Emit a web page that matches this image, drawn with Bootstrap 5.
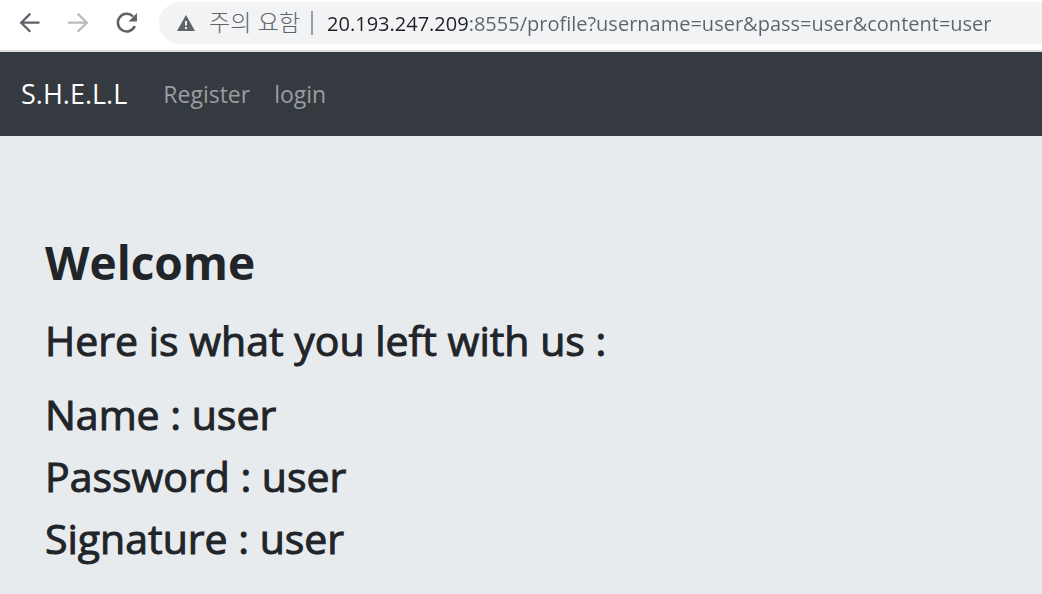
<!DOCTYPE html>
<html lang="en">
<head>
<meta charset="utf-8">
<meta name="viewport" content="width=device-width, initial-scale=1">
<title>S.H.E.L.L</title>
<link href="https://cdn.jsdelivr.net/npm/bootstrap@5.3.0/dist/css/bootstrap.min.css" rel="stylesheet">
<style>
body { font-family: "Open Sans", "Noto Sans", sans-serif; background: #e8ebee; color: #212529; }
.toolbar { height: 52px; padding: 2px 0 6px 16px; background: #fff; border-bottom: 2px solid #dadce0; }
.tool-btn { width: 28px; height: 28px; margin-right: 20px; color: #5f6368; background: none; border: 0; padding: 0; }
.tool-btn:last-of-type { margin-right: 19px; }
.tool-btn:disabled { color: #babcbe; }
.tool-btn svg { display: block; width: 28px; height: 28px; }
.omnibox { height: 42px; background: #f1f3f4; border-radius: 21px 0 0 21px; padding-left: 17px; font-size: 20px; color: #5f6368; }
.site-warning { font-family: "Noto Sans CJK KR", sans-serif; font-weight: 300; font-size: 23px; line-height: 38px; padding-bottom: 4px; margin-left: 13px; }
.divider { width: 2px; height: 24px; background: #9a9da1; margin: 0 14px 0 11px; }
/* the host is drawn darker than the rest of the address */
.address { min-width: 0; border: 0; padding: 2px 0 0; outline: 0; color: #5f6368; -webkit-text-fill-color: transparent;
  background: linear-gradient(90deg, #202124 142px, #5f6368 142px); -webkit-background-clip: text; background-clip: text; }
.site-nav { --bs-navbar-nav-link-padding-x: 12px; min-height: 84px; padding: 0 21px; background: #343a40; }
.site-nav .navbar-brand { font-size: 27px; line-height: 42px; margin-right: 24px; padding: 0; }
.site-nav .nav-link { font-size: 23px; line-height: 36px; color: #9a9da0; }
.profile { padding: 95px 45px 0; }
.profile h1 { font-size: 46px; line-height: 62px; font-weight: 700; margin: 0 0 16px; }
.profile h2 { font-size: 41px; line-height: 62px; font-weight: 500; -webkit-text-stroke: 1px currentColor; margin: 0; }
.profile .intro { margin-bottom: 12px; }
</style>
</head>
<body>
<div class="toolbar d-flex align-items-center">
  <button class="tool-btn" type="button" aria-label="Back"><svg viewBox="0 0 28 28" fill="none" stroke="currentColor" stroke-width="2.3"><path d="M23.500 13.700H6M14.300 4.600L5.200 13.700L14.300 22.800"/></svg></button>
  <button class="tool-btn" type="button" aria-label="Forward" disabled><svg viewBox="0 0 28 28" fill="none" stroke="currentColor" stroke-width="2.3"><path d="M4 13.700H22M13.700 4.600L22.800 13.700L13.700 22.800"/></svg></button>
  <button class="tool-btn" type="button" aria-label="Reload"><svg viewBox="0 0 28 28"><path d="M22.800 17A8.800 8.800 0 1 1 21 7.500" fill="none" stroke="currentColor" stroke-width="2.500"/><path d="M25 4V12.500H16.500Z" fill="currentColor"/></svg></button>
  <div class="omnibox d-flex align-items-center flex-grow-1">
    <svg width="20" height="18" viewBox="0 0 20 18" aria-hidden="true"><path d="M10 1L19 17H1Z" fill="#5f6368"/><path d="M10 7V11.500M10 13V15" stroke="#f1f3f4" stroke-width="2"/></svg>
    <label class="site-warning text-nowrap" for="address" lang="ko">주의 요함</label>
    <span class="divider"></span>
    <input class="address flex-grow-1" id="address" type="text" spellcheck="false" value="20.193.247.209:8555/profile?username=user&amp;pass=user&amp;content=user">
  </div>
</div>
<nav class="site-nav navbar navbar-expand navbar-dark">
  <a class="navbar-brand" href="#">S.H.E.L.L</a>
  <ul class="navbar-nav">
    <li class="nav-item"><a class="nav-link" href="#">Register</a></li>
    <li class="nav-item"><a class="nav-link" href="#">login</a></li>
  </ul>
</nav>
<main class="profile">
  <h1>Welcome</h1>
  <h2 class="intro">Here is what you left with us :</h2>
  <h2>Name : user</h2>
  <h2>Password : user</h2>
  <h2>Signature : user</h2>
</main>
<script src="https://cdn.jsdelivr.net/npm/bootstrap@5.3.0/dist/js/bootstrap.bundle.min.js"></script>
</body>
</html>
